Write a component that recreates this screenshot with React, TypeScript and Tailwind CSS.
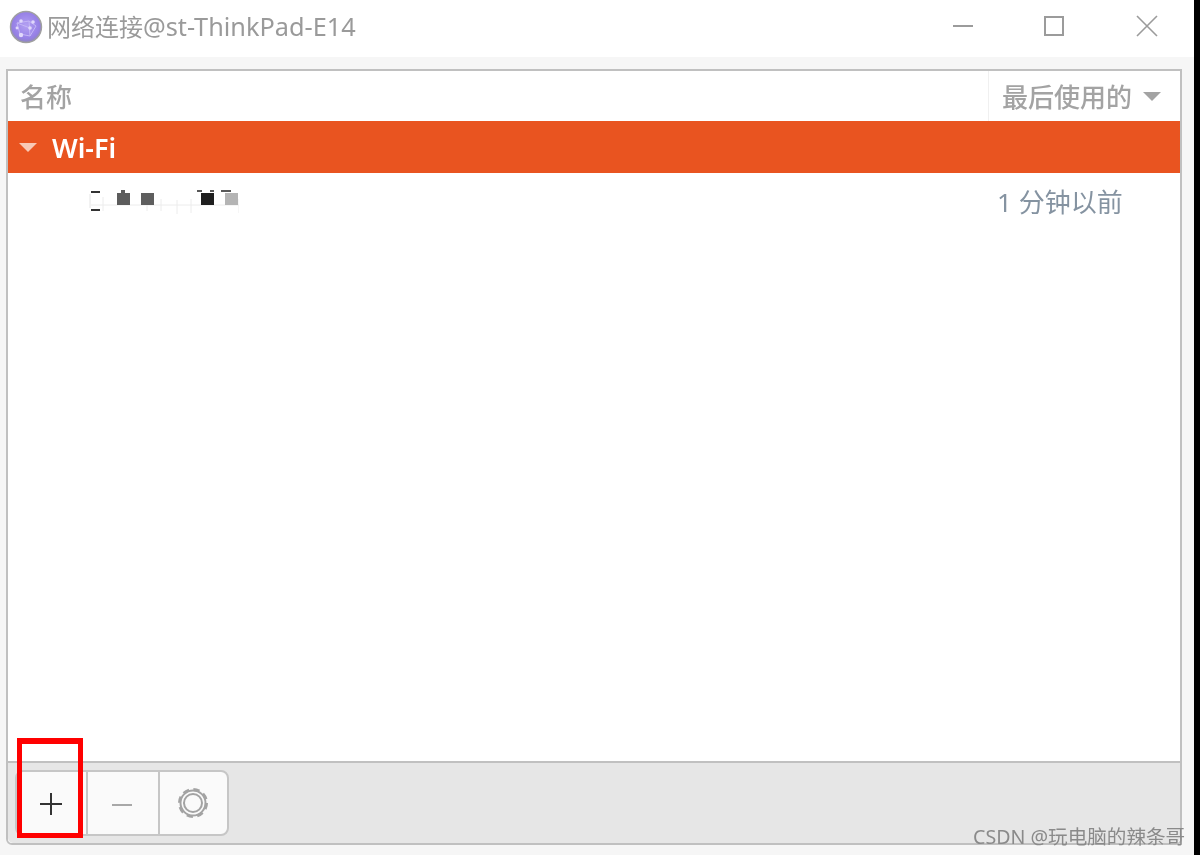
const cjk = "font-['Noto_Sans','Noto_Sans_CJK_SC',sans-serif]";

function AppIcon() {
  return (
    <svg width="34" height="34" viewBox="0 0 34 34" className="shrink-0 blur-[0.6px]">
      <defs>
        <radialGradient id="orb" cx="50%" cy="45%" r="55%">
          <stop offset="0%" stopColor="#b3a0f2" />
          <stop offset="78%" stopColor="#9680e6" />
          <stop offset="100%" stopColor="#8f88b8" />
        </radialGradient>
      </defs>
      <circle cx="17" cy="17" r="15.5" fill="url(#orb)" stroke="#a0a0a0" strokeWidth="1.4" />
      <g stroke="#c4b6f6" strokeWidth="1" fill="none">
        <path d="M8 13 L20 11 L27 16 L21 26 L11 24 Z M20 11 L21 26 M8 13 L21 18" />
      </g>
      <g fill="#e0d8fb">
        <circle cx="12" cy="11" r="1.8" />
        <circle cx="24" cy="12" r="1.8" />
        <circle cx="21" cy="18" r="1.8" />
        <circle cx="12" cy="25" r="2.2" />
        <circle cx="8" cy="18" r="1.4" />
      </g>
    </svg>
  );
}

function WindowButtons() {
  return (
    <div className="flex items-center gap-[71px] pb-[5px] pr-[36px] text-[#9b9b9b]">
      <svg width="22" height="22" viewBox="0 0 22 22" fill="none" stroke="currentColor" strokeWidth="2" className="mr-[-2px]">
        <path d="M1 11h20" />
      </svg>
      <svg width="22" height="22" viewBox="0 0 22 22" fill="none" stroke="currentColor" strokeWidth="2">
        <rect x="2" y="2" width="18" height="18" />
      </svg>
      <svg width="22" height="22" viewBox="0 0 22 22" fill="none" stroke="currentColor" strokeWidth="1.6">
        <path d="M1 1l20 20M21 1L1 21" />
      </svg>
    </div>
  );
}

// blurred-out connection name
function HiddenName() {
  return (
    <svg width="150" height="30" viewBox="0 0 150 30" className="block">
      <g stroke="#ececec" strokeWidth="1" fill="none">
        <path d="M2 18h148M14 10v14M58 14v10M72 12v12M88 13v14M102 12v14M150 12v14" />
      </g>
      <path d="M2 5h9M2 23h9" stroke="#333" strokeWidth="2" />
      <path d="M1 7v14" stroke="#e4e4e4" strokeWidth="1" />
      <rect x="28" y="6" width="13" height="12" fill="#5c5c5c" />
      <rect x="32" y="3" width="4" height="3" fill="#5c5c5c" />
      <rect x="52" y="6" width="13" height="12" fill="#5e5e5e" />
      <rect x="112" y="6" width="13" height="12" fill="#1e1e1e" />
      <path d="M108 4h5M121 4h4M132 4h10" stroke="#222" strokeWidth="1.5" />
      <rect x="136" y="6" width="13" height="12" fill="#b4b4b4" />
    </svg>
  );
}

export default function App() {
  return (
    <div className={`relative flex h-[855px] w-[1200px] overflow-hidden bg-[#f6f6f6] ${cjk}`}>
      <div className="flex w-[1194px] flex-col">
        <div className="flex h-[57px] items-center justify-between bg-white pl-[9px]">
          <div className="flex items-center gap-[4px] pb-[3px] text-[24px] leading-none text-[#9a9a9a]">
            <AppIcon />
            <span className="blur-[0.3px]">
              网络连接<span className="text-[25.3px]">@st-ThinkPad-E14</span>
            </span>
          </div>
          <WindowButtons />
        </div>

        <div className="flex flex-1 pb-[10px] pl-[6px] pr-[12px] pt-[12px]">
          <div className="flex flex-1 flex-col rounded-b-[6px] border-2 border-[#c0c0c0] bg-white">
            <div className="flex h-[50px] items-center justify-between text-[26px] font-medium leading-none text-[#a3a3a3]">
              <span className="pl-[12px] pt-[2px] blur-[0.3px]">名称</span>
              <div className="flex h-full w-[192px] items-center gap-[11px] border-l border-[#f0f0f0] pl-[13px]">
                <span className="pt-[2px] blur-[0.3px]">最后使用的</span>
                <span className="h-0 w-0 border-x-[9px] border-t-[9px] border-x-transparent border-t-[#a3a3a3]" />
              </div>
            </div>

            <div className="flex h-[52px] items-center gap-[15px] bg-[#e95420] pl-[11px]">
              <span className="h-0 w-0 border-x-[9px] border-t-[9px] border-x-transparent border-t-[#f8c9b6]" />
              <span className="text-[27px] font-semibold leading-none text-white blur-[0.3px]">Wi-Fi</span>
            </div>

            <div className="flex h-[56px] items-center justify-between">
              <div className="pl-[81px] pt-[2px]">
                <HiddenName />
              </div>
              <span className="w-[183px] pt-[1px] text-[26px] leading-none text-[#8593a1] blur-[0.3px]">1 分钟以前</span>
            </div>

            <div className="flex-1" />

            <div className="h-[82px] rounded-b-[5px] border-t-2 border-[#c0c0c0] bg-[#e6e6e6] pl-[7px] pt-[7px]">
              <div className="flex h-[66px] w-[214px] rounded-[8px] border-2 border-[#c6c6c6] bg-[#fafafa]">
                <div className="flex w-[71px] items-center justify-center border-r-2 border-[#c6c6c6] pr-[2px] pt-[2px] text-[#333333]">
                  <svg width="24" height="24" viewBox="0 0 24 24" fill="none" stroke="currentColor" strokeWidth="2">
                    <path d="M1 12h22M12 1v22" />
                  </svg>
                </div>
                <div className="flex w-[72px] items-center justify-center border-r-2 border-[#c6c6c6] pr-[2px] pt-[3px] text-[#a8a8a8]">
                  <svg width="22" height="22" viewBox="0 0 22 22" fill="none" stroke="currentColor" strokeWidth="2">
                    <path d="M1 11h20" />
                  </svg>
                </div>
                <div className="flex flex-1 items-center justify-center pr-[1px] text-[#a3a3a3]">
                  <svg width="32" height="32" viewBox="0 0 32 32" fill="none" stroke="currentColor" className="blur-[0.3px]">
                    <circle cx="16" cy="16" r="9" strokeWidth="2" />
                    <circle cx="16" cy="16" r="13.5" strokeWidth="3" strokeDasharray="6.2 4.4" />
                    <circle cx="16" cy="16" r="12.5" strokeWidth="2" />
                  </svg>
                </div>
              </div>
            </div>
          </div>
        </div>
      </div>

      <div className="w-[6px] bg-black" />

      <div className="absolute left-[17px] top-[738px] h-[100px] w-[66px] border-[5px] border-t-[6px] border-[#ff0000]" />
      <span className="absolute left-[973px] top-[826px] text-[19.6px] leading-[22px] text-[#8a8a8a] blur-[0.3px]">
        CSDN @玩电脑的辣条哥
      </span>
    </div>
  );
}
